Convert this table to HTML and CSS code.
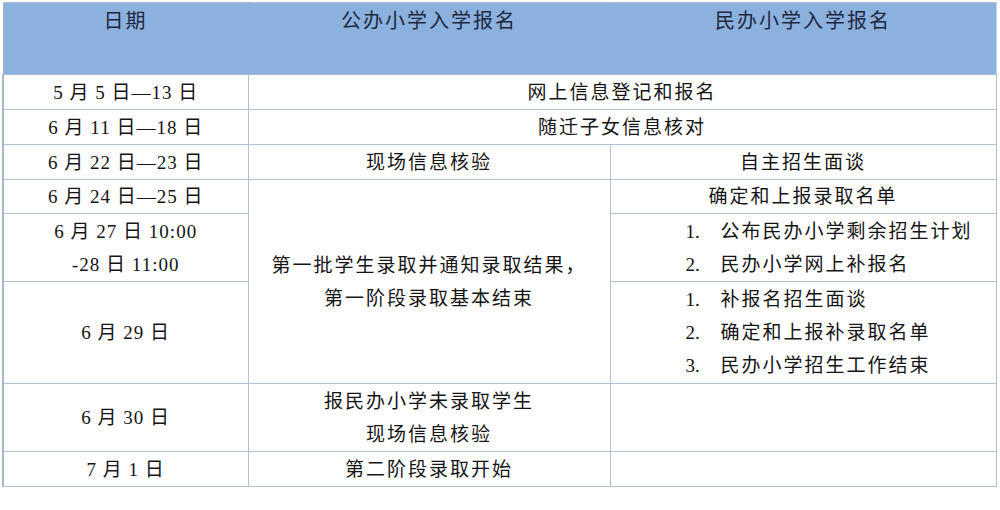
FILE: index.html
```html
<!DOCTYPE html>
<html lang="zh-CN">
<head>
<meta charset="utf-8">
<title>小学入学报名日程</title>
<link rel="stylesheet" href="styles.css">
</head>
<body>
<table class="schedule">
  <colgroup>
    <col class="c-date">
    <col class="c-pub">
    <col class="c-pri">
  </colgroup>
  <thead>
    <tr class="head">
      <th>日期</th>
      <th>公办小学入学报名</th>
      <th>民办小学入学报名</th>
    </tr>
  </thead>
  <tbody>
    <tr class="h35">
      <td class="date">5 月 5 日—13 日</td>
      <td colspan="2">网上信息登记和报名</td>
    </tr>
    <tr class="h35">
      <td class="date">6 月 11 日—18 日</td>
      <td colspan="2">随迁子女信息核对</td>
    </tr>
    <tr class="h35">
      <td class="date">6 月 22 日—23 日</td>
      <td>现场信息核验</td>
      <td>自主招生面谈</td>
    </tr>
    <tr class="h34">
      <td class="date">6 月 24 日—25 日</td>
      <td rowspan="3" class="multi">第一批学生录取并通知录取结果，<br>第一阶段录取基本结束</td>
      <td>确定和上报录取名单</td>
    </tr>
    <tr class="h68">
      <td class="date multi">6 月 27 日 10:00<br>-28 日 11:00</td>
      <td class="list">
        <div class="item"><span class="num">1.</span><span>公布民办小学剩余招生计划</span></div>
        <div class="item"><span class="num">2.</span><span>民办小学网上补报名</span></div>
      </td>
    </tr>
    <tr class="h102">
      <td class="date">6 月 29 日</td>
      <td class="list">
        <div class="item"><span class="num">1.</span><span>补报名招生面谈</span></div>
        <div class="item"><span class="num">2.</span><span>确定和上报补录取名单</span></div>
        <div class="item"><span class="num">3.</span><span>民办小学招生工作结束</span></div>
      </td>
    </tr>
    <tr class="h68">
      <td class="date">6 月 30 日</td>
      <td class="multi">报民办小学未录取学生<br>现场信息核验</td>
      <td></td>
    </tr>
    <tr class="h35">
      <td class="date">7 月 1 日</td>
      <td>第二阶段录取开始</td>
      <td></td>
    </tr>
  </tbody>
</table>
</body>
</html>
```
FILE: styles.css
```css
html, body {
  margin: 0;
  padding: 0;
  background: #ffffff;
}

body {
  padding: 2px 0 0 2px;
}

.schedule {
  border-collapse: collapse;
  table-layout: fixed;
  width: 993px;
  font-family: "Liberation Serif", "Noto Sans CJK SC", serif;
  font-size: 19px;
  color: #141414;
}

.c-date { width: 245px; }
.c-pub { width: 362px; }
.c-pri { width: 386px; }

.schedule th,
.schedule td {
  border: 1px solid #b2c0d4;
  padding: 0;
  text-align: center;
  vertical-align: middle;
  line-height: 33px;
  letter-spacing: 2px;
  font-weight: 400;
}

.schedule td.date {
  letter-spacing: 1px;
}

.schedule td.multi {
  line-height: 33px;
}

.head {
  height: 72px;
  background: #8db1df;
}

.head th {
  vertical-align: top;
  padding-top: 2px;
  font-size: 20px;
  color: #1c2940;
  border-top-color: #a9c2e4;
  border-left-color: #8db1df;
  border-right-color: #8db1df;
  border-bottom-color: #a9bcd6;
}

.head th:first-child {
  border-left-color: #a4b2c6;
}

.head th:last-child {
  border-right-color: #c6d0de;
}

.schedule td:first-child {
  border-left: 2px solid #aab6c8;
}

.h34 { height: 34px; }
.h35 { height: 35px; }
.h68 { height: 68px; }
.h102 { height: 102px; }

.schedule td.list {
  text-align: left;
  padding-left: 75px;
}

.item {
  display: flex;
  line-height: 33px;
}

.num {
  width: 35px;
  flex: none;
  letter-spacing: 0;
}
```
